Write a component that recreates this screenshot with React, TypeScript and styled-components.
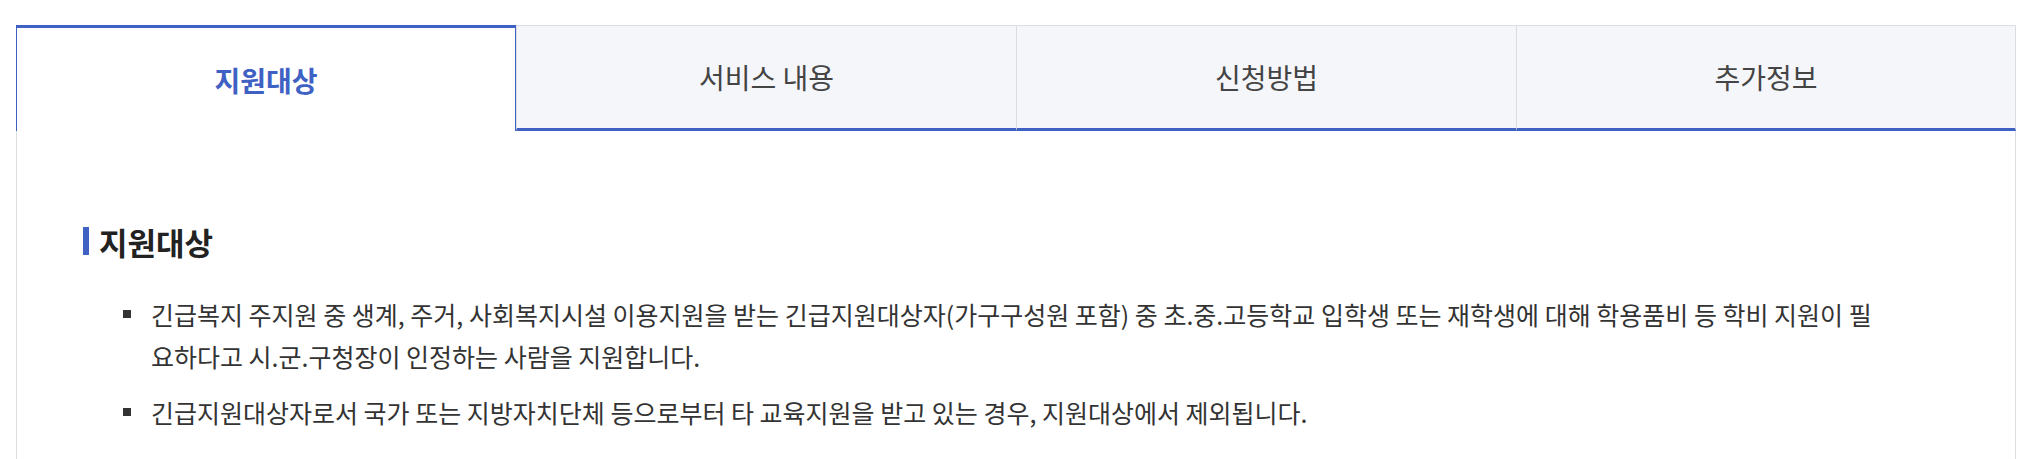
import React, { useState } from "react";
import styled, { createGlobalStyle, css } from "styled-components";

const BLUE = "#4061c4";
const LINE = "#dcdde1";

const GlobalStyle = createGlobalStyle`
  * { box-sizing: border-box; }
  body {
    margin: 0;
    background: #fff;
    font-family: "Noto Sans CJK KR", "Noto Sans", sans-serif;
    color: #333;
  }
`;

const Page = styled.div`
  width: 2016px;
  padding: 25px 0 0 16px;
`;

const TabList = styled.div`
  display: grid;
  grid-template-columns: repeat(4, 1fr);
  height: 106px;
`;

const Tab = styled.button<{ $active: boolean; $last: boolean }>`
  display: flex;
  align-items: center;
  justify-content: center;
  padding: 0;
  margin: 0;
  font-family: inherit;
  font-size: 28px;
  cursor: pointer;
  ${({ $active, $last }) =>
    $active
      ? css`
          background: #fff;
          color: ${BLUE};
          font-weight: 700;
          border: none;
          border-top: 3px solid ${BLUE};
          border-left: 1px solid ${BLUE};
          border-right: 1px solid ${BLUE};
        `
      : css`
          background: #f5f6fa;
          color: #444;
          font-weight: 400;
          border: none;
          border-top: 1px solid ${LINE};
          border-bottom: 3px solid ${BLUE};
          border-right: ${$last ? `1px solid ${LINE}` : "none"};
          & + & {
            border-left: 1px solid ${LINE};
          }
        `}
`;

const Panel = styled.section`
  min-height: 340px;
  border-left: 1px solid ${LINE};
  border-right: 1px solid ${LINE};
  padding: 90px 126px 40px 66px;
`;

const Heading = styled.h3`
  display: flex;
  align-items: center;
  gap: 10px;
  margin: 0;
  height: 40px;
  font-size: 31px;
  font-weight: 700;
  color: #222;

  &::before {
    content: "";
    width: 6px;
    height: 28px;
    background: ${BLUE};
  }
`;

const List = styled.ul`
  list-style: none;
  margin: 32px 0 0;
  padding: 0 0 0 40px;
  display: flex;
  flex-direction: column;
  gap: 14px;
`;

const Item = styled.li`
  position: relative;
  padding-left: 28px;
  font-size: 25px;
  line-height: 42px;
  color: #333;

  &::before {
    content: "";
    position: absolute;
    left: 0;
    top: 17px;
    width: 8px;
    height: 8px;
    background: #333;
  }
`;

const tabs = ["지원대상", "서비스 내용", "신청방법", "추가정보"];

const items = [
  "긴급복지 주지원 중 생계, 주거, 사회복지시설 이용지원을 받는 긴급지원대상자(가구구성원 포함) 중 초.중.고등학교 입학생 또는 재학생에 대해 학용품비 등 학비 지원이 필요하다고 시.군.구청장이 인정하는 사람을 지원합니다.",
  "긴급지원대상자로서 국가 또는 지방자치단체 등으로부터 타 교육지원을 받고 있는 경우, 지원대상에서 제외됩니다.",
];

export default function App() {
  const [active, setActive] = useState(0);
  return (
    <>
      <GlobalStyle />
      <Page>
        <TabList role="tablist">
          {tabs.map((t, i) => (
            <Tab
              key={t}
              role="tab"
              $active={i === active}
              $last={i === tabs.length - 1}
              onClick={() => setActive(i)}
            >
              {t}
            </Tab>
          ))}
        </TabList>
        <Panel>
          <Heading>지원대상</Heading>
          <List>
            {items.map((it) => (
              <Item key={it}>{it}</Item>
            ))}
          </List>
        </Panel>
      </Page>
    </>
  );
}
